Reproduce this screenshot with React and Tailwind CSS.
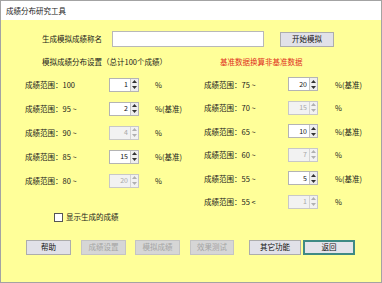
import React from "react";

const font = { fontFamily: '"Noto Sans CJK SC", "Noto Sans", sans-serif' };

function Spin({ value, disabled }) {
  return (
    <div
      className={
        "flex h-[14px] w-[30px] border " +
        (disabled ? "border-[#c8c8c8] bg-[#f2f2f2] text-[#a8a8a8]" : "border-[#b4b4b4] bg-white text-[#111]")
      }
    >
      <div className="flex flex-1 items-center justify-end pr-[2px] text-[7px] leading-none">{value}</div>
      <div className={"flex w-[8px] flex-col border-l " + (disabled ? "border-[#d4d4d4]" : "border-[#c4c4c4] bg-[#eeeeee]")}>
        <div className="flex flex-1 items-center justify-center">
          <svg width="5" height="3" viewBox="0 0 5 3">
            <path d="M0 3 L2.5 0 L5 3 Z" fill={disabled ? "#b0b0b0" : "#333"} />
          </svg>
        </div>
        <div className="flex flex-1 items-center justify-center">
          <svg width="5" height="3" viewBox="0 0 5 3">
            <path d="M0 0 L2.5 3 L5 0 Z" fill={disabled ? "#b0b0b0" : "#333"} />
          </svg>
        </div>
      </div>
    </div>
  );
}

function Row({ label, value, disabled, suffix, gap, h }) {
  return (
    <div className={"flex items-center " + h}>
      <div className="w-[84px] text-[7.5px] leading-none text-[#1a1a1a]">{label}</div>
      <Spin value={value} disabled={disabled} />
      <div className={"text-[7.5px] leading-none text-[#1a1a1a] " + gap}>{suffix}</div>
    </div>
  );
}

function Btn({ children, disabled, active, w }) {
  return (
    <div
      className={
        "flex h-[15px] items-center justify-center text-[7.5px] leading-none " +
        w +
        (active
          ? " border-2 border-[#3f8a84] bg-[#e4e4ea] text-[#111]"
          : disabled
          ? " border border-[#c4c4c4] bg-[#d6d6d6] text-[#a4a4a4]"
          : " border border-[#adadad] bg-[#e1e1e8] text-[#111]")
      }
    >
      {children}
    </div>
  );
}

export default function App() {
  const left = [
    { label: "成绩范围：100", value: 1, suffix: "%" },
    { label: "成绩范围：95 ~", value: 2, suffix: "%(基准)" },
    { label: "成绩范围：90 ~", value: 4, suffix: "%", disabled: true },
    { label: "成绩范围：85 ~", value: 15, suffix: "%(基准)" },
    { label: "成绩范围：80 ~", value: 20, suffix: "%", disabled: true },
  ];
  const right = [
    { label: "成绩范围：75 ~", value: 20, suffix: "%(基准)" },
    { label: "成绩范围：70 ~", value: 15, suffix: "%", disabled: true },
    { label: "成绩范围：65 ~", value: 10, suffix: "%(基准)" },
    { label: "成绩范围：60 ~", value: 7, suffix: "%", disabled: true },
    { label: "成绩范围：55 ~", value: 5, suffix: "%(基准)" },
    { label: "成绩范围：55 <", value: 1, suffix: "%", disabled: true },
  ];

  return (
    <div style={font} className="flex h-[283px] w-[382px] flex-col border border-[#a3a3a3] bg-[#ffff99]">
      <div className="flex h-[19px] items-center bg-white pl-[5px] text-[7.5px] text-[#222]">成绩分布研究工具</div>
      <div className="flex flex-1 flex-col pt-[11px]">
        <div className="flex items-center">
          <div className="ml-[41px] w-[70px] text-[7.5px] leading-none text-[#1a1a1a]">生成模拟成绩称名</div>
          <div className="h-[16px] w-[152px] border border-[#b8b8b8] bg-white" />
          <div className="ml-[16px]">
            <Btn w="w-[54px]">开始模拟</Btn>
          </div>
        </div>

        <div className="mt-[11px] flex items-center">
          <div className="ml-[41px] w-[178px] text-[7.5px] leading-none text-[#1a1a1a]">模拟成绩分布设置（总计100个成绩）</div>
          <div className="text-[7.5px] leading-none text-[#e0301c]">基准数据换算非基准数据</div>
        </div>

        <div className="mt-[7px] flex">
          <div className="ml-[24px] flex w-[179px] flex-col">
            {left.map((r, i) => (
              <Row key={i} {...r} gap="ml-[16px]" h="h-[24px]" />
            ))}
          </div>
          <div className="flex flex-col">
            {right.map((r, i) => (
              <Row key={i} {...r} gap="ml-[17px]" h="h-[23.5px]" />
            ))}
          </div>
        </div>

        <div className="-mt-[1px] ml-[53px] flex items-center">
          <div className="h-[9px] w-[9px] border border-[#555] bg-white" />
          <div className="ml-[3px] text-[7.5px] leading-none text-[#1a1a1a]">显示生成的成绩</div>
        </div>

        <div className="ml-[25px] mt-[18px] flex items-center">
          <Btn w="w-[45px]">帮助</Btn>
          <div className="ml-[10px]">
            <Btn w="w-[45px]" disabled>成绩设置</Btn>
          </div>
          <div className="ml-[9px]">
            <Btn w="w-[45px]" disabled>模拟成绩</Btn>
          </div>
          <div className="ml-[10px]">
            <Btn w="w-[44px]" disabled>效果测试</Btn>
          </div>
          <div className="ml-[15px]">
            <Btn w="w-[52px]">其它功能</Btn>
          </div>
          <div className="ml-[2px]">
            <Btn w="w-[52px]" active>返回</Btn>
          </div>
        </div>
      </div>
    </div>
  );
}
